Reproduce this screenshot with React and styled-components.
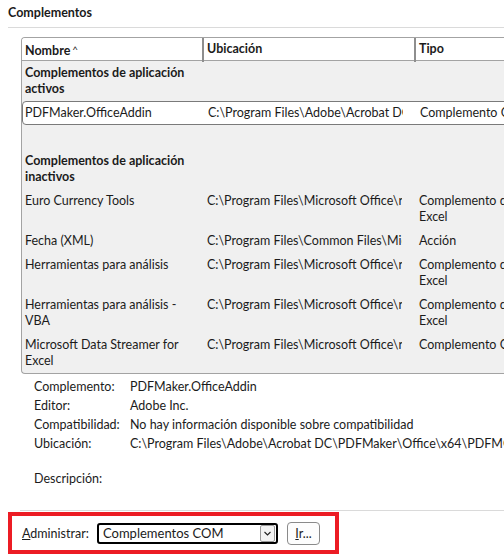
import React from 'react';
import styled, { createGlobalStyle } from 'styled-components';

const GlobalStyle = createGlobalStyle`
  html, body {
    margin: 0;
    padding: 0;
    background: #ffffff;
  }
  body {
    font-family: Lato, "Noto Sans", sans-serif;
    font-size: 12.5px;
    color: #1b1b1b;
    overflow: hidden;
  }
`;

const Page = styled.div`
  width: 504px;
  height: 559px;
  overflow: hidden;
  display: flex;
  flex-direction: column;
`;

const Title = styled.div`
  font-weight: 700;
  height: 27px;
  line-height: 25px;
  padding-left: 8px;
`;

const Rule = styled.div`
  height: 1px;
  flex: none;
  background: #dadada;
  margin-left: ${p => p.$indent}px;
  margin-top: ${p => p.$top || 0}px;
`;

const TableFrame = styled.div`
  margin: 9px 0 0 21px;
  width: 560px;
  flex: none;
  border: 1px solid #a3a3a3;
  border-right: none;
  border-radius: 4px 0 0 4px;
  background: #f0f0f0;
  overflow: hidden;
`;

const Grid = styled.div`
  display: grid;
  grid-template-columns: 182px 212px 1fr;
`;

const HeaderRow = styled(Grid)`
  background: #ffffff;
  height: 22px;
  border-bottom: 1px solid #a3a3a3;
`;

const HeaderCell = styled.div`
  font-weight: 700;
  line-height: 22px;
  padding-left: 3px;
  border-left: ${p => (p.$first ? 'none' : '2px solid #8e8e8e')};
  margin-left: ${p => (p.$first ? 0 : -2)}px;
`;

const SortCaret = styled.span`
  font-weight: 400;
  font-size: 10px;
  vertical-align: 2px;
  margin-left: 2px;
`;

const Row = styled(Grid)`
  line-height: 16px;
  background: ${p => (p.$selected ? '#ffffff' : 'transparent')};
  border: ${p => (p.$selected ? '1px solid #7a7a7a' : 'none')};
  border-radius: ${p => (p.$selected ? '4px' : '0')};
  padding: ${p => (p.$selected ? '3px 0' : '4px 0')};
`;

const GroupTitle = styled.div`
  grid-column: 1 / 2;
  font-weight: 700;
  padding: 0 4px 0 3px;
`;

const Cell = styled.div`
  padding-left: ${p => (p.$tight ? 2 : 3)}px;
  padding-right: 6px;
`;

const PathCell = styled.div`
  margin-left: 3px;
  margin-right: 14px;
  white-space: nowrap;
  overflow: hidden;
`;

const TypeCell = styled(Cell)`
  width: 116px;
`;

const Spacer = styled.div`
  height: 24px;
`;

const Details = styled.div`
  display: grid;
  grid-template-columns: 96px 1fr;
  grid-auto-rows: 19px;
  line-height: 19px;
  margin: ${p => p.$top}px 0 0 34px;
  white-space: nowrap;
`;

const Manage = styled.div`
  margin: 1px 0 0 8px;
  width: 313px;
  height: 34px;
  flex: none;
  border: 4px solid #ec1c24;
  display: flex;
  align-items: center;
  padding-left: 10px;
`;

const ManageLabel = styled.label`
  width: 75px;
  flex: none;
`;

const Key = styled.span`
  text-decoration: underline;
`;

const Select = styled.div`
  width: 173px;
  height: 17px;
  border: 2px solid #000000;
  border-radius: 3px;
  display: flex;
  align-items: center;
  justify-content: space-between;
  padding-left: 4px;
  font-size: 13px;
`;

const Arrow = styled.div`
  width: 13px;
  height: 15px;
  margin-right: 1px;
  border: 1px solid #9a9a9a;
  border-radius: 2px;
  background: #f3f3f3;
  display: flex;
  align-items: center;
  justify-content: center;
`;

const GoButton = styled.button`
  margin-left: 9px;
  width: 33px;
  height: 23px;
  padding: 0;
  border: 1px solid #8a8a8a;
  border-radius: 4px;
  background: #fdfdfd;
  font: inherit;
  color: inherit;
`;

const inactive = [
  ['Euro Currency Tools', 'C:\\Program Files\\Microsoft Office\\root\\Office16\\Library', 'Complemento de Excel'],
  ['Fecha (XML)', 'C:\\Program Files\\Common Files\\Microsoft Shared\\Smart Tag', 'Acción'],
  ['Herramientas para análisis', 'C:\\Program Files\\Microsoft Office\\root\\Office16\\Library', 'Complemento de Excel'],
  ['Herramientas para análisis - VBA', 'C:\\Program Files\\Microsoft Office\\root\\Office16\\Library', 'Complemento de Excel'],
  ['Microsoft Data Streamer for Excel', 'C:\\Program Files\\Microsoft Office\\root\\Office16', 'Complemento COM'],
];

const info = [
  ['Complemento:', 'PDFMaker.OfficeAddin'],
  ['Editor:', 'Adobe Inc.'],
  ['Compatibilidad:', 'No hay información disponible sobre compatibilidad'],
  ['Ubicación:', 'C:\\Program Files\\Adobe\\Acrobat DC\\PDFMaker\\Office\\x64\\PDFMOfficeAddin.dll'],
];

export default function App() {
  return (
    <Page>
      <GlobalStyle />
      <Title>Complementos</Title>
      <Rule $indent={8} />

      <TableFrame>
        <HeaderRow>
          <HeaderCell $first>
            Nombre<SortCaret>^</SortCaret>
          </HeaderCell>
          <HeaderCell>Ubicación</HeaderCell>
          <HeaderCell>Tipo</HeaderCell>
        </HeaderRow>

        <Row>
          <GroupTitle>Complementos de aplicación activos</GroupTitle>
        </Row>
        <Row $selected>
          <Cell $tight>PDFMaker.OfficeAddin</Cell>
          <PathCell>C:\Program Files\Adobe\Acrobat DC\PDFMaker\Office\x64</PathCell>
          <TypeCell>Complemento COM</TypeCell>
        </Row>
        <Spacer />
        <Row>
          <GroupTitle>Complementos de aplicación inactivos</GroupTitle>
        </Row>
        {inactive.map(([name, path, type]) => (
          <Row key={name}>
            <Cell>{name}</Cell>
            <PathCell>{path}</PathCell>
            <TypeCell>{type}</TypeCell>
          </Row>
        ))}
      </TableFrame>

      <Details $top={3}>
        {info.map(([label, value]) => (
          <React.Fragment key={label}>
            <span>{label}</span>
            <span>{value}</span>
          </React.Fragment>
        ))}
      </Details>
      <Details $top={16}>
        <span>Descripción:</span>
        <span />
      </Details>

      <Rule $indent={20} $top={22} />

      <Manage>
        <ManageLabel>
          <Key>A</Key>dministrar:
        </ManageLabel>
        <Select>
          <span>Complementos COM</span>
          <Arrow>
            <svg width="7" height="5" viewBox="0 0 7 5">
              <path d="M0.5 1 L3.5 4 L6.5 1" fill="none" stroke="#222" strokeWidth="1.1" />
            </svg>
          </Arrow>
        </Select>
        <GoButton>
          <Key>I</Key>r...
        </GoButton>
      </Manage>
    </Page>
  );
}
